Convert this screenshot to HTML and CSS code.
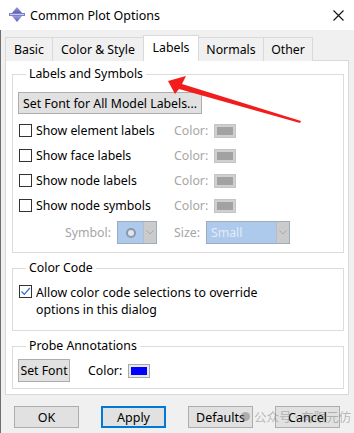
FILE: index.html
```html
<!DOCTYPE html>
<html lang="en">
<head>
  <meta charset="UTF-8">
  <meta name="viewport" content="width=device-width, initial-scale=1.0">
  <title>Common Plot Options</title>
  <link rel="stylesheet" href="styles.css">
</head>

<body>

  <div class="titlebar">
    <svg class="app-icon" width="16" height="15" viewBox="0 0 16 15">
      <defs>
        <linearGradient id="ig" x1="0" y1="0" x2="0" y2="1">
          <stop offset="0" stop-color="#9a9de0"/>
          <stop offset="1" stop-color="#5a5fb2"/>
        </linearGradient>
      </defs>
      <polygon points="8,0 13,6 3,6" fill="url(#ig)"/>
      <rect x="0" y="6" width="16" height="3" fill="#7c80c9"/>
      <polygon points="3,9 13,9 8,15" fill="url(#ig)"/>
      <line x1="1" y1="7.5" x2="15" y2="7.5" stroke="#c9cbf2" stroke-width="1"/>
    </svg>
    <span class="title">Common Plot Options</span>
    <svg class="close" width="11" height="11" viewBox="0 0 11 11">
      <path d="M0.5 0.5 L10.5 10.5 M10.5 0.5 L0.5 10.5" stroke="#111" stroke-width="1.1"/>
    </svg>
  </div>

  <div class="tabs">
    <div class="tab tab-basic">Basic</div>
    <div class="tab tab-color">Color &amp; Style</div>
    <div class="tab tab-labels active">Labels</div>
    <div class="tab tab-normals">Normals</div>
    <div class="tab tab-other">Other</div>
  </div>

  <div class="panel">
    <fieldset class="group group-labels">
      <legend>Labels and Symbols</legend>
      <button class="btn btn-wide">Set Font for All Model Labels...</button>

      <div class="opt-row">
        <label class="check"><span class="box"></span>Show element labels</label>
        <span class="dim">Color:</span>
        <span class="swatch"><span class="fill"></span></span>
      </div>
      <div class="opt-row">
        <label class="check"><span class="box"></span>Show face labels</label>
        <span class="dim">Color:</span>
        <span class="swatch"><span class="fill"></span></span>
      </div>
      <div class="opt-row">
        <label class="check"><span class="box"></span>Show node labels</label>
        <span class="dim">Color:</span>
        <span class="swatch"><span class="fill"></span></span>
      </div>
      <div class="opt-row">
        <label class="check"><span class="box"></span>Show node symbols</label>
        <span class="dim">Color:</span>
        <span class="swatch"><span class="fill"></span></span>
      </div>

      <div class="symbol-row">
        <div class="symbol-cell">
          <span class="dim">Symbol:</span>
          <span class="combo combo-symbol">
            <span class="combo-value"><span class="ring"></span></span>
            <span class="combo-arrow">
              <svg width="8" height="5" viewBox="0 0 8 5"><path d="M0.5 0.5 L4 4 L7.5 0.5" fill="none" stroke="#a8a8a8"/></svg>
            </span>
          </span>
        </div>
        <div class="size-cell">
          <span class="dim">Size:</span>
          <span class="combo combo-size">
            <span class="combo-value">Small</span>
            <span class="combo-arrow">
              <svg width="8" height="5" viewBox="0 0 8 5"><path d="M0.5 0.5 L4 4 L7.5 0.5" fill="none" stroke="#a8a8a8"/></svg>
            </span>
          </span>
        </div>
      </div>
    </fieldset>

    <fieldset class="group group-gap group-code">
      <legend>Color Code</legend>
      <label class="check check-multi">
        <span class="box checked">
          <svg width="11" height="11" viewBox="0 0 11 11"><path d="M1.5 5.5 L4.3 8.3 L9.8 2" fill="none" stroke="#2b6fd0" stroke-width="1.2"/></svg>
        </span>
        <span>Allow color code selections to override<br>options in this dialog</span>
      </label>
    </fieldset>

    <fieldset class="group group-gap group-probe">
      <legend>Probe Annotations</legend>
      <div class="probe-row">
        <button class="btn btn-small">Set Font</button>
        <span>Color:</span>
        <span class="swatch swatch-blue"><span class="fill"></span></span>
      </div>
    </fieldset>
  </div>

  <div class="footer">
    <button class="btn btn-action">OK</button>
    <button class="btn btn-action btn-default">Apply</button>
    <button class="btn btn-action">Defaults</button>
    <button class="btn btn-action">Cancel</button>
  </div>

  <div class="watermark"><span class="wm-dot"></span>公众号 · 有限元仿</div>

  <svg class="annotation" width="354" height="433" viewBox="0 0 354 433">
    <polygon points="168,81 186,76 182,84 301,121 300,123 179,89 175,94" fill="#f21c1c"/>
  </svg>

</body>
</html>
```

FILE: styles.css
```css
body {
  margin: 0;
  width: 354px;
  height: 433px;
  overflow: hidden;
  position: relative;
  background-color: #f0f0f0;
  box-shadow: inset 1px 0 #6e6e6e;
  font-family: "Noto Sans", "Noto Sans CJK SC", sans-serif;
  font-size: 12.3px;
  color: #000;
}

.titlebar {
  height: 30px;
  background-color: #fff;
  display: flex;
  align-items: center;
  padding-left: 9px;
}

.app-icon {
  margin-top: -1px;
}

.title {
  margin-left: 5px;
  font-size: 12.5px;
}

.close {
  margin-left: auto;
  margin-right: 10px;
}

.tabs {
  display: flex;
  align-items: flex-end;
  height: 26px;
  margin-top: 5px;
  margin-bottom: -1px;
  padding-left: 5px;
}

.tab {
  box-sizing: border-box;
  height: 24px;
  line-height: 23px;
  text-align: center;
  border: 1px solid #d9d9d9;
  border-bottom: none;
  margin-left: -1px;
  background-color: #f0f0f0;
}

.tab-basic {
  width: 48px;
  margin-left: 0;
}

.tab-color {
  width: 92px;
}

.tab-labels {
  width: 56px;
}

.tab-normals {
  width: 66px;
}

.tab-other {
  width: 50px;
}

.tab.active {
  position: relative;
  height: 26px;
  line-height: 24px;
  background-color: #fff;
}

.panel {
  margin-left: 5px;
  width: 344px;
  box-sizing: border-box;
  background-color: #fff;
  border: 1px solid #d9d9d9;
  padding: 5px 4px 5px 6px;
}

.group {
  margin: 0;
  min-width: 0;
  border: 1px solid #dcdcdc;
  padding: 10px 6px 6px 6px;
}

.group legend {
  margin-left: 7px;
  padding: 0 3px;
  line-height: 16px;
}

.group-gap {
  margin-top: 7px;
}

.group-labels {
  padding-bottom: 8px;
}

.group-code {
  padding-top: 8px;
  padding-bottom: 12px;
}

.group-probe {
  padding-top: 5px;
  padding-bottom: 6px;
}

.btn {
  font-family: inherit;
  font-size: 12.3px;
  color: #000;
  background-color: #e1e1e1;
  border: 1px solid #adadad;
  padding: 0;
  height: 22px;
}

.btn-wide {
  width: 184px;
  margin-left: -1px;
  margin-bottom: 4px;
  display: block;
}

.btn-small {
  width: 52px;
  height: 23px;
  margin-left: -1px;
}

.opt-row {
  display: grid;
  grid-template-columns: 155px 40px auto;
  align-items: center;
  height: 25px;
}

.check {
  display: flex;
  align-items: center;
}

.box {
  width: 11px;
  height: 11px;
  border: 1px solid #333;
  background-color: #fff;
  margin-right: 4px;
  flex: none;
  display: flex;
}

.check-multi {
  align-items: flex-start;
  line-height: 17px;
}

.check-multi .box {
  margin-top: 1px;
}

.dim {
  color: #a6a6a6;
}

.swatch {
  width: 22px;
  height: 14px;
  box-sizing: border-box;
  border: 1px solid #c4c4c4;
  padding: 2px;
  background-color: #d0d0d0;
}

.swatch .fill {
  display: block;
  height: 100%;
  background-color: #a2a2a2;
}

.swatch-blue {
  border-color: #a8a8a8;
  background-color: #e9e9e9;
}

.swatch-blue .fill {
  background-color: #0000ff;
}

.symbol-row {
  display: grid;
  grid-template-columns: 155px auto;
  align-items: center;
  height: 23px;
  margin-top: 3px;
}

.symbol-cell,
.size-cell {
  display: flex;
  align-items: center;
  gap: 6px;
}

.symbol-cell {
  justify-content: flex-end;
  padding-right: 17px;
}

.combo {
  display: flex;
  height: 23px;
  box-sizing: border-box;
  border: 1px solid #9eabbd;
  background-color: #adc9ec;
}

.combo-symbol {
  width: 40px;
}

.combo-size {
  width: 84px;
}

.combo-value {
  flex: 1;
  display: flex;
  align-items: center;
  padding-left: 4px;
  color: #e4ecf7;
}

.combo-symbol .combo-value {
  justify-content: center;
  padding-left: 0;
}

.ring {
  width: 6px;
  height: 6px;
  border: 2px solid #8d97a6;
  border-radius: 50%;
  background-color: #dfe6ef;
}

.combo-arrow {
  width: 12px;
  border-left: 1px solid #b8bec6;
  background-color: #cbcbcb;
  display: flex;
  align-items: center;
  justify-content: center;
}

.probe-row {
  display: flex;
  align-items: center;
  gap: 6px;
}

.probe-row .btn-small {
  margin-right: 12px;
}

.footer {
  display: flex;
  justify-content: space-between;
  padding: 0 14px;
  margin-top: 11px;
}

.btn-action {
  width: 65px;
  height: 22px;
  font-size: 12.5px;
}

.btn-default {
  border: 2px solid #0078d7;
}

.watermark {
  position: absolute;
  left: 241px;
  top: 407px;
  display: flex;
  align-items: center;
  gap: 4px;
  font-size: 12.5px;
  color: rgba(110, 110, 110, 0.45);
  pointer-events: none;
}

.wm-dot {
  width: 9px;
  height: 9px;
  border-radius: 50%;
  background-color: rgba(110, 110, 110, 0.45);
}

.annotation {
  position: absolute;
  left: 0;
  top: 0;
  pointer-events: none;
}
```
